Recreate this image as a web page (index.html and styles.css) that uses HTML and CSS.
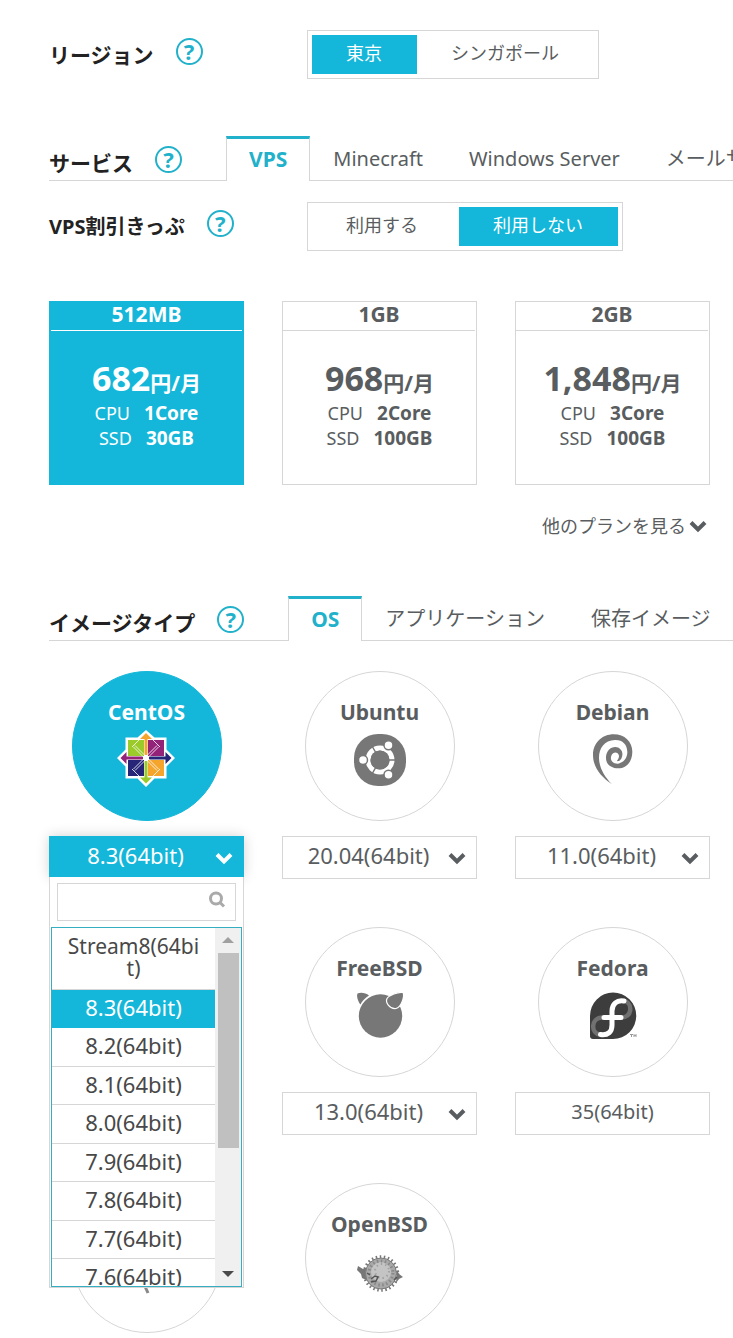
FILE: index.html
```html
<!DOCTYPE html>
<html lang="ja">
<head>
<meta charset="utf-8">
<meta name="viewport" content="width=device-width, initial-scale=1">
<title>VPS</title>
<link rel="stylesheet" href="styles.css">
</head>
<body>
<main class="page">
  <section class="option-row">
    <div class="label option-label"><h2 class="label-text">リージョン</h2><button class="help" type="button">?</button></div>
    <div class="segment">
      <button class="segment-item is-active" type="button">東京</button>
      <button class="segment-item" type="button">シンガポール</button>
    </div>
  </section>

  <section class="tab-row service-row">
    <div class="label tab-label"><h2 class="label-text">サービス</h2><button class="help" type="button">?</button></div>
    <nav class="tabs">
      <a class="tab is-active" href="#vps">VPS</a>
      <a class="tab" href="#minecraft">Minecraft</a>
      <a class="tab" href="#windows">Windows Server</a>
      <a class="tab" href="#mail">メールサーバー</a>
    </nav>
  </section>

  <section class="option-row ticket-row">
    <div class="label option-label"><h2 class="label-text label-small">VPS割引きっぷ</h2><button class="help" type="button">?</button></div>
    <div class="segment segment-spaced">
      <button class="segment-item" type="button">利用する</button>
      <button class="segment-item is-active" type="button">利用しない</button>
    </div>
  </section>

  <section class="plans">
    <button class="plan is-active" type="button">
      <span class="plan-name">512MB</span>
      <span class="plan-price"><span class="amount">682</span>円/月</span>
      <span class="spec"><span>CPU</span><b>1Core</b></span>
      <span class="spec"><span>SSD</span><b>30GB</b></span>
    </button>
    <button class="plan" type="button">
      <span class="plan-name">1GB</span>
      <span class="plan-price"><span class="amount">968</span>円/月</span>
      <span class="spec"><span>CPU</span><b>2Core</b></span>
      <span class="spec"><span>SSD</span><b>100GB</b></span>
    </button>
    <button class="plan" type="button">
      <span class="plan-name">2GB</span>
      <span class="plan-price"><span class="amount">1,848</span>円/月</span>
      <span class="spec"><span>CPU</span><b>3Core</b></span>
      <span class="spec"><span>SSD</span><b>100GB</b></span>
    </button>
  </section>
  <div class="more">
    <a class="more-link" href="#plans">他のプランを見る<svg class="chevron" viewBox="0 0 18 13"><path d="M2 2.500l7 7 7-7"/></svg></a>
  </div>

  <section class="tab-row image-row">
    <div class="label tab-label"><h2 class="label-text">イメージタイプ</h2><button class="help" type="button">?</button></div>
    <nav class="tabs">
      <a class="tab is-active" href="#os">OS</a>
      <a class="tab" href="#app">アプリケーション</a>
      <a class="tab" href="#saved">保存イメージ</a>
    </nav>
  </section>

  <section class="images">
    <div class="image-item">
      <button class="disc is-active" type="button">
        <span class="disc-name">CentOS</span>
        <svg class="logo" viewBox="0 0 58 58">
          <path fill="#fff" d="M28 0l8.500 7.500h12v12L57 28l-8.500 8.500v12h-12L28 57l-8.500-8.500h-12v-12L-1 28l8.500-8.500v-12h12z"/>
          <path fill="#9acb2b" d="M10 10h16v16H10z"/><path fill="#932279" d="M30 10h16v16H30z"/>
          <path fill="#262577" d="M10 30h16v16H10z"/><path fill="#f5a52b" d="M30 30h16v16H30z"/>
          <path fill="#f5a52b" d="M28 3l6 6h-4.500v16h-3V9H22z"/>
          <path fill="#9acb2b" d="M28 53.500l6-6h-4.500V31h-3v16.500H22z"/>
          <path fill="#932279" d="M2.500 28l6-6v4.500H25v3H8.500V34z"/>
          <path fill="#262577" d="M53.500 28l-6-6v4.500H31v3h16.500V34z"/>
          <path fill="none" stroke="#fff" stroke-opacity=".8" stroke-width="1" d="M28 26.500L17 15.500M26.500 28l-11-11M29.500 28l11-11M28 26.500l11-11M26.500 28l-11 11M28 29.500l-11 11M29.500 28l11 11M28 29.500l11 11M22 9l-8 8M34 9l8 8M22 47l-8-8M34 47l8-8"/>
          <circle cx="28" cy="28" r="2.500" fill="#fff"/>
        </svg>
      </button>
      <div class="dropdown">
        <button class="dropdown-button" type="button" aria-expanded="true">8.3(64bit)</button>
        <svg class="chevron select-chevron" viewBox="0 0 18 13"><path d="M2 2.500l7 7 7-7"/></svg>
        <div class="dropdown-panel">
          <div class="search">
            <input class="search-input" type="text" aria-label="検索">
            <svg class="search-icon" viewBox="0 0 18 18"><circle cx="8" cy="7.500" r="5.500"/><path d="M12 11.500l4 4"/></svg>
          </div>
          <div class="list">
            <ul class="options" role="listbox">
              <li class="option option-long" role="option">Stream8(64bit)</li>
              <li class="option is-active" role="option" aria-selected="true">8.3(64bit)</li>
              <li class="option" role="option">8.2(64bit)</li>
              <li class="option" role="option">8.1(64bit)</li>
              <li class="option" role="option">8.0(64bit)</li>
              <li class="option" role="option">7.9(64bit)</li>
              <li class="option" role="option">7.8(64bit)</li>
              <li class="option" role="option">7.7(64bit)</li>
              <li class="option" role="option">7.6(64bit)</li>
            </ul>
            <div class="scrollbar">
              <span class="arrow arrow-up"></span>
              <span class="thumb"></span>
              <span class="arrow arrow-down"></span>
            </div>
          </div>
        </div>
      </div>
    </div>

    <div class="image-item">
      <button class="disc" type="button">
        <span class="disc-name">Ubuntu</span>
        <svg class="logo" viewBox="0 0 58 58">
          <rect x="3" y="4" width="52" height="52" rx="24" fill="#777"/>
          <circle cx="29" cy="30" r="12" fill="none" stroke="#fff" stroke-width="5"/>
          <path stroke="#777" stroke-width="1.500" d="M29 30h16M29 30l-8-14M29 30l-8 14"/>
          <circle cx="29" cy="30" r="9.500" fill="#777"/>
          <g fill="#fff" stroke="#777" stroke-width="1.500"><circle cx="12" cy="30" r="4.500"/><circle cx="37.500" cy="15.200" r="4.500"/><circle cx="37.500" cy="44.800" r="4.500"/></g>
        </svg>
      </button>
      <div class="select-wrap">
        <select class="select" aria-label="Ubuntu"><option>20.04(64bit)</option></select>
        <svg class="chevron select-chevron" viewBox="0 0 18 13"><path d="M2 2.500l7 7 7-7"/></svg>
      </div>
    </div>

    <div class="image-item">
      <button class="disc" type="button">
        <span class="disc-name">Debian</span>
        <svg class="logo" viewBox="0 0 174 174">
          <path fill="#777" transform="translate(27 13)" d="M57 150C25 128 0 100 0 62 0 25 28 0 62 0c33 0 56 22 56 52 0 30-18 50-42 50-24 0-38-14-37-34 1-18 13-30 28-30 13 0 23 12 21 24-1 10-6 18-14 19l-2-2c6-7 7-13 5-18-4-9-17-9-22 3-5 14 5 25 20 24 17-2 29-18 28-36-1-22-15-36-37-35-32 1-48 25-48 53 0 30 17 58 39 80z"/>
        </svg>
      </button>
      <div class="select-wrap">
        <select class="select" aria-label="Debian"><option>11.0(64bit)</option></select>
        <svg class="chevron select-chevron" viewBox="0 0 18 13"><path d="M2 2.500l7 7 7-7"/></svg>
      </div>
    </div>

    <div class="image-item second-column">
      <button class="disc" type="button">
        <span class="disc-name">FreeBSD</span>
        <svg class="logo" viewBox="0 0 58 58">
          <circle cx="29.500" cy="30" r="21.700" fill="#777"/>
          <path fill="#777" d="M6.500 7.500C5 11 8 17 9.500 18.500 11 15 14 12 18 9.500 15 7 10 6 6.500 7.500z"/>
          <path fill="#777" stroke="#fff" stroke-width="1.200" d="M52 6.500c-5-1-14 3-16 6-2 4 3 11 9 10 5-1 9-12 7-16z"/>
        </svg>
      </button>
      <div class="select-wrap">
        <select class="select" aria-label="FreeBSD"><option>13.0(64bit)</option></select>
        <svg class="chevron select-chevron" viewBox="0 0 18 13"><path d="M2 2.500l7 7 7-7"/></svg>
      </div>
    </div>

    <div class="image-item">
      <button class="disc" type="button">
        <span class="disc-name">Fedora</span>
        <svg class="logo" viewBox="0 0 58 58">
          <path fill="#3d3d3d" d="M29 6.500a23 23 0 1 1 0 46.500H9a3 3 0 0 1-3-3V30A23 23.500 0 0 1 29 6.500z"/>
          <g fill="none" stroke-linecap="round">
            <path stroke="#717171" stroke-width="4.500" d="M41 15c8 3 7 17-4 16.500M18 31.500c-12 1-11 16-2 17"/>
            <path stroke="#fff" stroke-width="5" d="M40 15c-7-1.500-12 3-12 10v14c0 7-4 10.500-11.500 9.500M20 31.500h17"/>
          </g>
          <path stroke="#999" stroke-width="1" fill="none" d="M46 48.500h3M47.500 48.500v2.500M50 51v-2.500l1 1.500 1-1.500v2.500"/>
        </svg>
      </button>
      <div class="fixed-version">35(64bit)</div>
    </div>

    <div class="image-item">
      <div class="disc">
        <svg class="logo logo-bare" viewBox="0 0 58 58"><path stroke="#888" stroke-width="3" d="M25 40l5 11"/></svg>
      </div>
    </div>

    <div class="image-item">
      <button class="disc" type="button">
        <span class="disc-name">OpenBSD</span>
        <svg class="logo" viewBox="0 0 58 58">
          <path fill="#777" d="M7 24l5 3 3-1v12l-4-2-1-4-4-4zM46 28l2 4 4 3-4 2-3 4z"/>
          <circle cx="30" cy="31.500" r="16.500" fill="none" stroke="#777" stroke-width="3.500" stroke-dasharray="1.500 2.500"/>
          <circle cx="30" cy="31.500" r="15.500" fill="#a9a9a9" stroke="#7a7a7a" stroke-width="1"/>
          <circle cx="30" cy="30" r="10" fill="#c4c4c4"/>
          <circle cx="30" cy="31" r="12" fill="none" stroke="#888" stroke-width="3" stroke-dasharray="1.500 2.500"/>
          <circle cx="31" cy="29" r="7" fill="none" stroke="#a2a2a2" stroke-width="2" stroke-dasharray="1.500 3"/>
          <path fill="none" stroke="#555" stroke-width="1.500" d="M20 37l4-3 3 1-2 4-5 1M16 31l3 2M43 38l3-3"/>
        </svg>
      </button>
    </div>
  </section>
</main>
</body>
</html>
```
FILE: styles.css
```css
:root {
  --accent: #14b7d9;
  --accent-line: #22b1ca;
  --line: #d6d6d6;
  --text: #595d60;
}

* { box-sizing: border-box; }

body {
  margin: 0;
  background: #fff;
  color: var(--text);
  font-family: "Noto Sans", "Noto Sans CJK JP", sans-serif;
  font-size: 20px;
  overflow-x: hidden;
}

button, input, select { font: inherit; color: inherit; margin: 0; }
button { cursor: pointer; }

.page { padding: 30px 0 4px 49px; }

/* Labels */
.label { display: flex; align-items: center; gap: 22px; }
.label-text {
  margin: 0;
  color: #222;
  font-size: 21px;
  line-height: 30px;
  font-weight: 700;
  white-space: nowrap;
}
.label-small { font-size: 20px; }
.help {
  width: 27px;
  height: 27px;
  flex: none;
  margin-bottom: 6px;
  padding: 0;
  border: 2px solid var(--accent-line);
  border-radius: 50%;
  background: none;
  color: var(--accent-line);
  font-size: 22px;
  line-height: 23px;
  font-weight: 700;
}

/* Two-way switches */
.option-row { display: flex; align-items: center; padding-right: 23px; }
.option-label { width: 258px; }
.ticket-row { margin-top: 21px; }
.segment { display: flex; padding: 4px; border: 1px solid var(--line); }
.segment-spaced { gap: 6px; }
.segment-item {
  padding: 0 35px 2px 34px;
  border: 0;
  background: none;
  font-size: 18px;
  line-height: 37px;
  white-space: nowrap;
}
.segment-item.is-active { background: var(--accent); color: #fff; }

/* Tabs */
.tab-row {
  display: flex;
  align-items: flex-end;
  gap: 44px;
  overflow: hidden;
  box-shadow: inset 0 -1px var(--line);
}
.service-row { margin-top: 57px; }
.image-row { margin-top: 56px; }
.tab-label { padding-bottom: 2px; }
.tabs { display: flex; }
.tab {
  padding: 0 22px 2px;
  border: solid transparent;
  border-width: 3px 1px 0;
  color: var(--text);
  line-height: 40px;
  text-decoration: none;
  white-space: nowrap;
}
.tab.is-active {
  border-color: var(--accent-line) var(--line) var(--line);
  background: #fff;
  color: var(--accent-line);
  font-size: 21px;
  font-weight: 700;
}

/* Plans */
.plans {
  display: grid;
  grid-template-columns: repeat(3, minmax(0, 1fr));
  gap: 38px;
  margin-top: 50px;
  padding-right: 23px;
}
.plan {
  display: flex;
  flex-direction: column;
  padding: 0 0 33px;
  border: 1px solid var(--line);
  background: #fff;
  text-align: center;
}
.plan-name {
  align-self: stretch;
  margin: 0 1px 24px 0;
  padding-bottom: 4px;
  border-bottom: 1px solid var(--line);
  font-size: 21px;
  line-height: 24px;
  font-weight: 700;
}
.plan-price { align-self: center; font-size: 21px; font-weight: 700; line-height: 24px; white-space: nowrap; }
.amount { font-size: 34px; line-height: 46px; }
.spec {
  display: flex;
  align-items: baseline;
  align-self: center;
  gap: 14px;
  font-size: 18px;
  line-height: 25px;
}
.spec b { font-size: 19px; }
.plan.is-active { border-color: var(--accent); background: var(--accent); color: #fff; }
.plan.is-active .plan-name { margin: 0 1px 24px; border-color: #fff; }

.more { display: flex; justify-content: flex-end; margin-top: 27px; padding-right: 26px; }
.more-link {
  display: flex;
  align-items: center;
  gap: 3px;
  color: var(--text);
  font-size: 18px;
  line-height: 28px;
  text-decoration: none;
}
.chevron { width: 18px; height: 13px; fill: none; stroke: currentColor; stroke-width: 4; }

/* Image types */
.images {
  display: grid;
  grid-template-columns: repeat(3, minmax(0, 1fr));
  gap: 48px 38px;
  margin-top: 30px;
  padding-right: 23px;
}
.image-item { display: flex; flex-direction: column; align-items: center; gap: 15px; }
.second-column { grid-column: 2; }
.disc {
  display: flex;
  flex-direction: column;
  align-items: center;
  gap: 4px;
  width: 150px;
  height: 150px;
  padding: 26px 0 0;
  border: 1px solid var(--line);
  border-radius: 50%;
  background: #fff;
}
.disc.is-active { border-color: var(--accent); background: var(--accent); color: #fff; }
.disc-name { font-size: 21px; line-height: 28px; font-weight: 700; }
.logo { width: 58px; height: 58px; overflow: visible; }
.logo-bare { margin-top: 32px; }

.select-wrap, .dropdown { position: relative; align-self: stretch; }
.select, .dropdown-button {
  display: block;
  width: 100%;
  border: 1px solid var(--line);
  border-radius: 0;
  background: #fff;
  font-size: 22px;
  text-align: center;
}
.select {
  height: 43px;
  padding: 0 22px 6px 0;
  appearance: none;
  text-align-last: center;
}
.dropdown-button {
  height: 41px;
  padding: 0 22px 4px 0;
  border-color: var(--accent);
  background: var(--accent);
  color: #fff;
  line-height: 34px;
  box-shadow: 0 0 12px rgba(0, 0, 0, 0.18);
}
.select-chevron { position: absolute; top: 16px; right: 11px; pointer-events: none; }
.dropdown .select-chevron { color: #fff; }
.fixed-version {
  align-self: stretch;
  padding-bottom: 3px;
  border: 1px solid var(--line);
  line-height: 38px;
  text-align: center;
}

.dropdown-panel {
  position: absolute;
  top: 100%;
  left: 0;
  right: 0;
  z-index: 2;
  padding: 6px 1px 0;
  border: 1px solid var(--line);
  border-top: 0;
  background: #fff;
}
.search { position: relative; margin: 0 6px 6px; }
.search-input {
  display: block;
  width: 100%;
  height: 38px;
  padding: 0 34px 0 8px;
  border: 1px solid var(--line);
  outline: 0;
}
.search-icon {
  position: absolute;
  top: 8px;
  right: 10px;
  width: 18px;
  height: 18px;
  fill: none;
  stroke: #aaa;
  stroke-width: 3;
}
.list { display: flex; height: 360px; overflow: hidden; border: 1px solid #35aec2; }
.options { flex: 1; margin: 0; padding: 0; list-style: none; color: #484848; }
.option {
  height: 38px;
  border-bottom: 1px solid var(--line);
  font-size: 22px;
  line-height: 34px;
  text-align: center;
}
.option:nth-child(odd) { height: 39px; }
.option.option-long {
  height: 62px;
  padding: 7px 12px 0;
  font-size: 21px;
  line-height: 22px;
  word-break: break-all;
}
.option.is-active { border-color: var(--accent); background: var(--accent); color: #fff; }
.scrollbar {
  display: flex;
  flex-direction: column;
  align-items: center;
  width: 26px;
  padding: 9px 0;
  background: #f0f0f0;
}
.arrow { border: solid transparent; border-width: 0 6px; }
.arrow-up { border-bottom: 6px solid #a0a0a0; }
.arrow-down { margin-top: auto; border-top: 6px solid #4a4a4a; }
.thumb { width: 21px; height: 195px; margin-top: 10px; background: #c0c0c0; }
```
